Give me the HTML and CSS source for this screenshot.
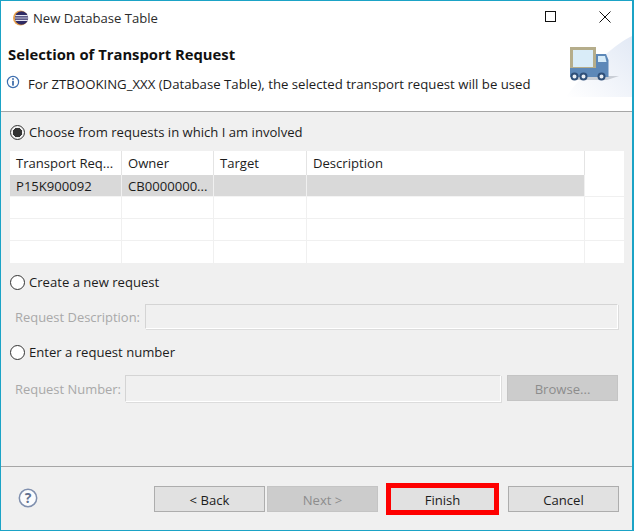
FILE: index.html
```html
<!DOCTYPE html>
<html lang="en">
<head>
<meta charset="utf-8">
<title>New Database Table</title>
<link rel="stylesheet" href="styles.css">
</head>
<body>
<div class="window">
  <header class="titlebar">
    <svg class="app-icon" width="18" height="18" viewBox="0 0 18 18">
      <circle cx="8.500" cy="9" r="7.500" fill="#e9a24c"/>
      <circle cx="9.500" cy="9" r="6.700" fill="#2f2a63"/>
      <path d="M3.400 6.600h12.400M3 9h13.200M3.400 11.400h12.400" stroke="#e6e6f2" stroke-width="1.100"/>
    </svg>
    <span class="title">New Database Table</span>
    <span class="spacer"></span>
    <div class="winbtns">
      <svg width="12" height="12" viewBox="0 0 12 12"><rect x="0.500" y="0.500" width="10" height="10" fill="none" stroke="#111"/></svg>
      <svg width="12" height="12" viewBox="0 0 12 12"><path d="M0.500 0.500L11.500 11.500M11.500 0.500L0.500 11.500" stroke="#111" fill="none"/></svg>
    </div>
  </header>

  <section class="banner">
    <div class="banner-text">
      <h1 class="heading">Selection of Transport Request</h1>
      <p class="message">
        <svg width="14" height="14" viewBox="0 0 14 14"><circle cx="7" cy="7" r="5.600" fill="#fff" stroke="#3d6fb0" stroke-width="1.200"/><rect x="6.200" y="3.200" width="1.600" height="1.600" fill="#2a5d9f"/><rect x="6.200" y="5.800" width="1.600" height="4.800" fill="#2a5d9f"/></svg>
        <span>For ZTBOOKING_XXX (Database Table), the selected transport request will be used</span>
      </p>
    </div>
    <svg class="truck" width="69" height="62" viewBox="0 0 69 62">
      <defs>
        <linearGradient id="sky" x1="0" y1="1" x2="1" y2="0">
          <stop offset="0" stop-color="#ffffff"/>
          <stop offset="1" stop-color="#e2e9f5"/>
        </linearGradient>
      </defs>
      <path d="M3 62C12 50 24 34 42 20C50 13 60 5 69 1V62Z" fill="url(#sky)"/>
      <path d="M14 41H56L44 45H14Z" fill="#c9ced6"/>
      <rect x="8.500" y="13.500" width="23" height="20" fill="#d9ecf8" stroke="#b5ad8b" stroke-width="3"/>
      <rect x="7" y="33" width="38" height="9" fill="#5d88b8"/>
      <path d="M33 19H43L45.500 25V42H33Z" fill="#5d88b8"/>
      <path d="M35 21H42L43.500 27H35Z" fill="#d6ebf8"/>
      <circle cx="11.500" cy="41.500" r="3" fill="#e8eef5" stroke="#2f4f78" stroke-width="2"/>
      <circle cx="20.500" cy="41.500" r="3" fill="#e8eef5" stroke="#2f4f78" stroke-width="2"/>
      <circle cx="38.500" cy="41.500" r="3" fill="#e8eef5" stroke="#2f4f78" stroke-width="2"/>
    </svg>
  </section>

  <main class="content">
    <div class="radio-row first">
      <span class="radio checked"></span>
      <span>Choose from requests in which I am involved</span>
    </div>

    <div class="table">
      <div class="cell head">Transport Req...</div>
      <div class="cell head">Owner</div>
      <div class="cell head">Target</div>
      <div class="cell head">Description</div>
      <div class="cell head tail"></div>

      <div class="cell sel">P15K900092</div>
      <div class="cell sel">CB0000000...</div>
      <div class="cell sel"></div>
      <div class="cell sel"></div>
      <div class="cell tail"></div>

      <div class="cell"></div><div class="cell"></div><div class="cell"></div><div class="cell"></div><div class="cell tail"></div>
      <div class="cell"></div><div class="cell"></div><div class="cell"></div><div class="cell"></div><div class="cell tail"></div>
      <div class="cell"></div><div class="cell"></div><div class="cell"></div><div class="cell"></div><div class="cell tail"></div>
    </div>

    <div class="radio-row create">
      <span class="radio"></span>
      <span>Create a new request</span>
    </div>
    <div class="field-row desc">
      <span class="label">Request Description:</span>
      <span class="input"></span>
    </div>
    <div class="radio-row enter">
      <span class="radio"></span>
      <span>Enter a request number</span>
    </div>
    <div class="field-row number">
      <span class="label">Request Number:</span>
      <span class="input"></span>
      <span class="btn disabled browse">Browse...</span>
    </div>
  </main>

  <footer class="footer">
    <svg class="help" width="20" height="20" viewBox="0 0 20 20">
      <circle cx="10" cy="10" r="8.700" fill="#fbfcfe" stroke="#7f8fae" stroke-width="1.500"/>
      <text x="10" y="14.800" text-anchor="middle" class="help-mark">?</text>
    </svg>
    <div class="buttons">
      <span class="btn">&lt; Back</span>
      <span class="btn disabled next">Next &gt;</span>
      <span class="finish-wrap">
        <span class="btn">Finish</span>
        <span class="highlight"></span>
      </span>
      <span class="btn">Cancel</span>
    </div>
  </footer>
</div>
</body>
</html>
```
FILE: styles.css
```css
* { box-sizing: border-box; }
html, body { margin: 0; padding: 0; }
body {
  width: 634px;
  height: 531px;
  overflow: hidden;
  font-family: "Open Sans", "Noto Sans", sans-serif;
  font-size: 13.100px;
  color: #1c1c1c;
}
.window {
  width: 634px;
  height: 531px;
  display: flex;
  flex-direction: column;
  background: #f0f0f0;
  border: solid #1ba3c6;
  border-width: 1px 2px 1px 1px;
}
.titlebar {
  height: 33px;
  flex: none;
  display: flex;
  align-items: center;
  background: #fff;
  padding-left: 11px;
}
.app-icon { margin-right: 3px; }
.title { color: #2b2b2b; }
.spacer { flex: 1; }
.winbtns {
  display: flex;
  gap: 42px;
  padding-right: 21px;
  margin-top: -1px;
}
.banner {
  height: 78px;
  flex: none;
  background: #fff;
  border-bottom: 1px solid #a6a6a6;
  display: flex;
  justify-content: space-between;
}
.banner-text { padding: 8px 0 0 7px; }
.heading {
  margin: 0;
  font-size: 14.800px;
  font-weight: 700;
  line-height: 24px;
  color: #111;
}
.message {
  margin: 8px 0 0;
  display: flex;
  align-items: center;
  gap: 8px;
  line-height: 20px;
  font-size: 13.200px;
}
.message svg { margin: -5px 0 0 -2px; }
.truck { flex: none; align-self: flex-start; margin-top: 1px; }
.content {
  flex: 1;
  padding: 0 12px 0 9px;
  display: flex;
  flex-direction: column;
}
.radio-row {
  display: flex;
  align-items: center;
  gap: 4px;
  height: 20px;
}
.radio-row.first { margin-top: 10px; }
.radio-row.create { margin-top: 8px; }
.radio-row.enter { margin-top: 13px; }
.radio {
  width: 15px;
  height: 15px;
  border-radius: 50%;
  border: 1px solid #333;
  background: #fff;
  flex: none;
}
.radio.checked { background: radial-gradient(circle, #333 0 4.500px, #f0f0f0 5px); }
.table {
  margin-top: 9px;
  width: 614px;
  height: 113px;
  display: grid;
  grid-template-columns: 112px 92px 93px 278px 39px;
  grid-template-rows: 24px 22px 22px 22px 23px;
  background: #fff;
}
.cell {
  padding: 0 0 0 6px;
  line-height: 21px;
  border-right: 1px solid #f0f0f0;
  border-bottom: 1px solid #f0f0f0;
  white-space: nowrap;
  overflow: hidden;
  background: #fff;
}
.cell.head { border-bottom: 0; border-right: 1px solid #e4e4e4; line-height: 25px; }
.cell.tail { border-right: 0; }
.cell.sel {
  background: #d9d9d9;
  border-right: 1px solid #f0f0f0;
  border-bottom: 1px solid #f4f4f4;
  line-height: 22px;
}
.head.tail { border: 0; }
.field-row {
  display: flex;
  align-items: center;
  height: 25px;
  color: #a9a9a9;
}
.field-row.desc { margin-top: 12px; }
.field-row.number { margin-top: 13px; height: 27px; }
.label { padding-left: 5px; font-size: 12.950px; }
.input {
  flex: 1;
  height: 25px;
  background: #f0f0f0;
  border: 1px solid;
  border-color: #d4d4d4 #fff #fff #d4d4d4;
  box-shadow: 1px 1px 0 #dcdcdc;
}
.field-row.desc .input { margin-left: 5px; margin-right: 2px; }
.field-row.number .input { height: 27px; margin-left: 4px; margin-right: 6px; }
.footer {
  height: 64px;
  flex: none;
  border-top: 1px solid #a6a6a6;
  display: flex;
  align-items: flex-start;
  justify-content: space-between;
  padding: 19px 13px 0 17px;
}
.help { margin-top: 2px; }
.help-mark {
  font-family: "Open Sans", sans-serif;
  font-weight: 700;
  font-size: 14px;
  fill: #62718f;
}
.buttons { display: flex; gap: 2px; }
.btn {
  width: 111px;
  height: 26px;
  display: flex;
  align-items: center;
  justify-content: center;
  padding-top: 1px;
  background: #e1e1e1;
  border: 1px solid #adadad;
  color: #1c1c1c;
}
.btn.disabled {
  background: #cccccc;
  border-color: #c4c4c4;
  color: #8c8c8c;
}
.btn.browse { margin-right: 2px; align-self: flex-start; }
.finish-wrap {
  position: relative;
  margin: 0 8px 0 7px;
  display: block;
}
.highlight {
  position: absolute;
  left: -1px;
  top: -3px;
  width: 113px;
  height: 32px;
  border: 5px solid #fe0000;
}
```
